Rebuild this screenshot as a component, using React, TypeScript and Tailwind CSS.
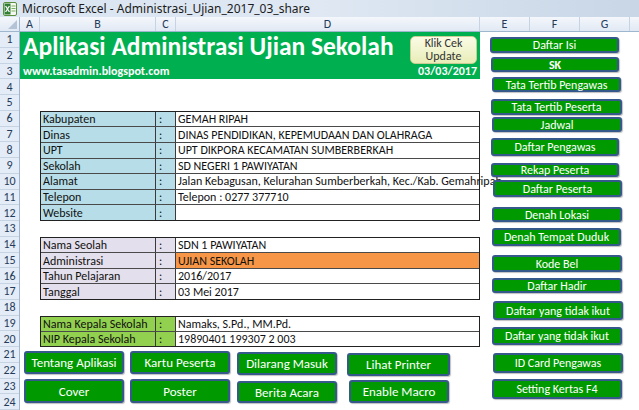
import React from 'react';

const font = "font-['Carlito','Calibri','Lato',sans-serif]";

const ExcelIcon = () => (
    <svg width="14" height="14" viewBox="0 0 14 14" className="shrink-0">
        <rect x="0.5" y="0.5" width="13" height="13" rx="1.5" fill="#f4f8f1" stroke="#5a8f3c" />
        <rect x="1.5" y="1.5" width="6" height="11" fill="#2e7d32" />
        <path d="M2.6 4 L6.4 10 M6.4 4 L2.6 10" stroke="#fff" strokeWidth="1.3" />
        <path d="M8.5 4h4M8.5 6.5h4M8.5 9h4" stroke="#6aa84f" strokeWidth="0.9" />
    </svg>
);

const ColHead: React.FC<{ label: string; className: string }> = ({ label, className }) => (
    <div className={`${className} h-full shrink-0 flex items-center justify-center border-r border-[#c5d3e3] text-[12px] leading-none text-[#243b5a]`}>
        {label}
    </div>
);

const Row: React.FC<{ label: string; value: string; labelBg: string; valueBg?: string; last?: boolean }> = ({ label, value, labelBg, valueBg = 'bg-white', last }) => (
    <div className={`flex-1 flex min-h-0 ${last ? '' : 'border-b border-[#4a4a4a]'}`}>
        <div className={`w-[115px] shrink-0 ${labelBg} border-r border-[#3a3a3a] pl-[2px] flex items-center whitespace-nowrap leading-none`}>{label}</div>
        <div className={`w-[20px] shrink-0 ${labelBg} border-r border-[#3a3a3a] pl-[3px] flex items-center leading-none`}>:</div>
        <div className={`flex-1 min-w-0 ${valueBg} pl-[2px] flex items-center whitespace-nowrap leading-none`}>{value}</div>
    </div>
);

const btn = `absolute flex items-center justify-center bg-[#009a00] border-2 border-[#34598a] rounded-[3px] text-white ${font} leading-none whitespace-nowrap shadow-[1px_1px_1px_rgba(0,0,0,0.25)]`;

export default function App() {
    const rows = Array.from({ length: 24 }, (_, i) => i + 1);

    return (
        <div className={`relative w-[639px] h-[410px] overflow-hidden bg-white ${font}`}>
            {/* window title */}
            <div className="h-[17px] flex items-center gap-[5px] pl-[3px] bg-gradient-to-r from-[#d9e5f2] via-[#dfe8f3] to-[#c8d6e6] text-[12px] text-[#1b1b1b] font-['Noto_Sans',sans-serif]">
                <ExcelIcon />
                <span className="leading-none">Microsoft Excel - Administrasi_Ujian_2017_03_share</span>
            </div>

            {/* column headers */}
            <div className="h-[15px] flex bg-gradient-to-b from-[#f4f7fb] to-[#e1e9f4] border-b border-[#9eb6ce]">
                <div className="w-[20px] h-full shrink-0 border-r border-[#9eb6ce] relative">
                    <div className="absolute right-[2px] bottom-[2px] w-0 h-0 border-l-[9px] border-l-transparent border-b-[9px] border-b-[#b4c3d6]" />
                </div>
                <ColHead label="A" className="w-[20px]" />
                <ColHead label="B" className="w-[116px]" />
                <ColHead label="C" className="w-[20px]" />
                <ColHead label="D" className="w-[304px]" />
                <ColHead label="E" className="w-[50px]" />
                <ColHead label="F" className="w-[50px]" />
                <ColHead label="G" className="w-[50px]" />
                <div className="flex-1" />
            </div>

            <div className="flex">
                {/* row headers */}
                <div className="w-[20px] shrink-0 flex flex-col bg-[#e4ecf7] border-r border-[#9eb6ce]">
                    {rows.map(r => (
                        <div key={r} className="h-[15.75px] flex items-center justify-center border-b border-[#c5d3e3] text-[12px] text-[#243b5a] leading-none">
                            {r}
                        </div>
                    ))}
                </div>

                {/* sheet */}
                <div className="flex-1 flex flex-col text-[12px] text-[#111]">
                    <div className="relative w-[460px] h-[47.25px] bg-[#00b050] text-white font-bold">
                        <div className="absolute left-[3px] top-[2px] text-[25.5px] leading-[26px]">Aplikasi Administrasi Ujian Sekolah</div>
                        <div className="absolute left-[3px] bottom-[2px] text-[12px] leading-none">www.tasadmin.blogspot.com</div>
                        <div className="absolute right-[3px] bottom-[2px] text-[12px] leading-none">03/03/2017</div>
                        <div className="absolute left-[390px] top-[4px] w-[67px] h-[28px] rounded-[5px] border border-[#c9cd93] bg-gradient-to-b from-[#fbfce6] to-[#e8edb7] flex flex-col items-center justify-center text-[12px] leading-[13px] font-normal text-[#333]">
                            <span>Klik Cek</span>
                            <span>Update</span>
                        </div>
                    </div>
                    <div className="h-[31.5px]" />

                    <div className="ml-[20px] w-[440px] h-[110.25px] flex flex-col border border-[#222]">
                        <Row label="Kabupaten" value="GEMAH RIPAH" labelBg="bg-[#b7dee8]" />
                        <Row label="Dinas" value="DINAS PENDIDIKAN, KEPEMUDAAN DAN OLAHRAGA" labelBg="bg-[#b7dee8]" />
                        <Row label="UPT" value="UPT DIKPORA KECAMATAN SUMBERBERKAH" labelBg="bg-[#b7dee8]" />
                        <Row label="Sekolah" value="SD NEGERI 1 PAWIYATAN" labelBg="bg-[#b7dee8]" />
                        <Row label="Alamat" value="Jalan Kebagusan, Kelurahan Sumberberkah, Kec./Kab. Gemahripah" labelBg="bg-[#b7dee8]" />
                        <Row label="Telepon" value="Telepon : 0277 377710" labelBg="bg-[#b7dee8]" />
                        <Row label="Website" value="" labelBg="bg-[#b7dee8]" last />
                    </div>
                    <div className="h-[15.75px]" />

                    <div className="ml-[20px] w-[440px] h-[63px] flex flex-col border border-[#222]">
                        <Row label="Nama Seolah" value="SDN 1 PAWIYATAN" labelBg="bg-[#e4dfec]" />
                        <Row label="Administrasi" value="UJIAN SEKOLAH" labelBg="bg-[#e4dfec]" valueBg="bg-[#f79646]" />
                        <Row label="Tahun Pelajaran" value="2016/2017" labelBg="bg-[#e4dfec]" />
                        <Row label="Tanggal" value="03 Mei 2017" labelBg="bg-[#e4dfec]" last />
                    </div>
                    <div className="h-[15.75px]" />

                    <div className="ml-[20px] w-[440px] h-[31.5px] flex flex-col border border-[#222]">
                        <Row label="Nama Kepala Sekolah" value="Namaks, S.Pd., MM.Pd." labelBg="bg-[#92d050]" />
                        <Row label="NIP Kepala Sekolah" value="19890401 199307 2 003" labelBg="bg-[#92d050]" last />
                    </div>
                </div>
            </div>

            {/* right menu shapes */}
            <div className={`${btn} left-[490px] top-[37px] w-[129px] h-[16px] text-[12px]`}>Daftar Isi</div>
            <div className={`${btn} left-[491px] top-[57px] w-[128px] h-[15px] text-[12px] font-bold`}>SK</div>
            <div className={`${btn} left-[492px] top-[77px] w-[129px] h-[15px] text-[12px]`}>Tata Tertib Pengawas</div>
            <div className={`${btn} left-[491px] top-[99px] w-[131px] h-[16px] text-[12px]`}>Tata Tertib Peserta</div>
            <div className={`${btn} left-[492px] top-[117px] w-[130px] h-[15px] text-[12px]`}>Jadwal</div>
            <div className={`${btn} left-[491px] top-[138px] w-[128px] h-[18px] text-[12px]`}>Daftar Pengawas</div>
            <div className={`${btn} left-[491px] top-[163px] w-[128px] h-[14px] text-[12px]`}>Rekap Peserta</div>
            <div className={`${btn} left-[493px] top-[180px] w-[129px] h-[17px] text-[12px]`}>Daftar Peserta</div>
            <div className={`${btn} left-[492px] top-[207px] w-[130px] h-[15px] text-[12px]`}>Denah Lokasi</div>
            <div className={`${btn} left-[492px] top-[228px] w-[129px] h-[18px] text-[12px]`}>Denah Tempat Duduk</div>
            <div className={`${btn} left-[492px] top-[255px] w-[130px] h-[17px] text-[12px]`}>Kode Bel</div>
            <div className={`${btn} left-[492px] top-[278px] w-[130px] h-[15px] text-[12px]`}>Daftar Hadir</div>
            <div className={`${btn} left-[493px] top-[301px] w-[130px] h-[19px] text-[12px]`}>Daftar yang tidak ikut</div>
            <div className={`${btn} left-[492px] top-[327px] w-[130px] h-[18px] text-[12px]`}>Daftar yang tidak ikut</div>
            <div className={`${btn} left-[493px] top-[353px] w-[130px] h-[20px] text-[12px]`}>ID Card Pengawas</div>
            <div className={`${btn} left-[492px] top-[379px] w-[130px] h-[20px] text-[12px]`}>Setting Kertas F4</div>

            {/* bottom shapes */}
            <div className={`${btn} left-[24px] top-[351px] w-[100px] h-[23px] text-[13px]`}>Tentang Aplikasi</div>
            <div className={`${btn} left-[130px] top-[351px] w-[100px] h-[23px] text-[13px]`}>Kartu Peserta</div>
            <div className={`${btn} left-[237px] top-[352px] w-[100px] h-[23px] text-[13px]`}>Dilarang Masuk</div>
            <div className={`${btn} left-[347px] top-[353px] w-[103px] h-[23px] text-[13px]`}>Lihat Printer</div>
            <div className={`${btn} left-[24px] top-[379px] w-[100px] h-[24px] text-[13px]`}>Cover</div>
            <div className={`${btn} left-[130px] top-[379px] w-[100px] h-[24px] text-[13px]`}>Poster</div>
            <div className={`${btn} left-[237px] top-[381px] w-[100px] h-[22px] text-[13px]`}>Berita Acara</div>
            <div className={`${btn} left-[349px] top-[380px] w-[100px] h-[23px] text-[13px]`}>Enable Macro</div>
        </div>
    );
}
